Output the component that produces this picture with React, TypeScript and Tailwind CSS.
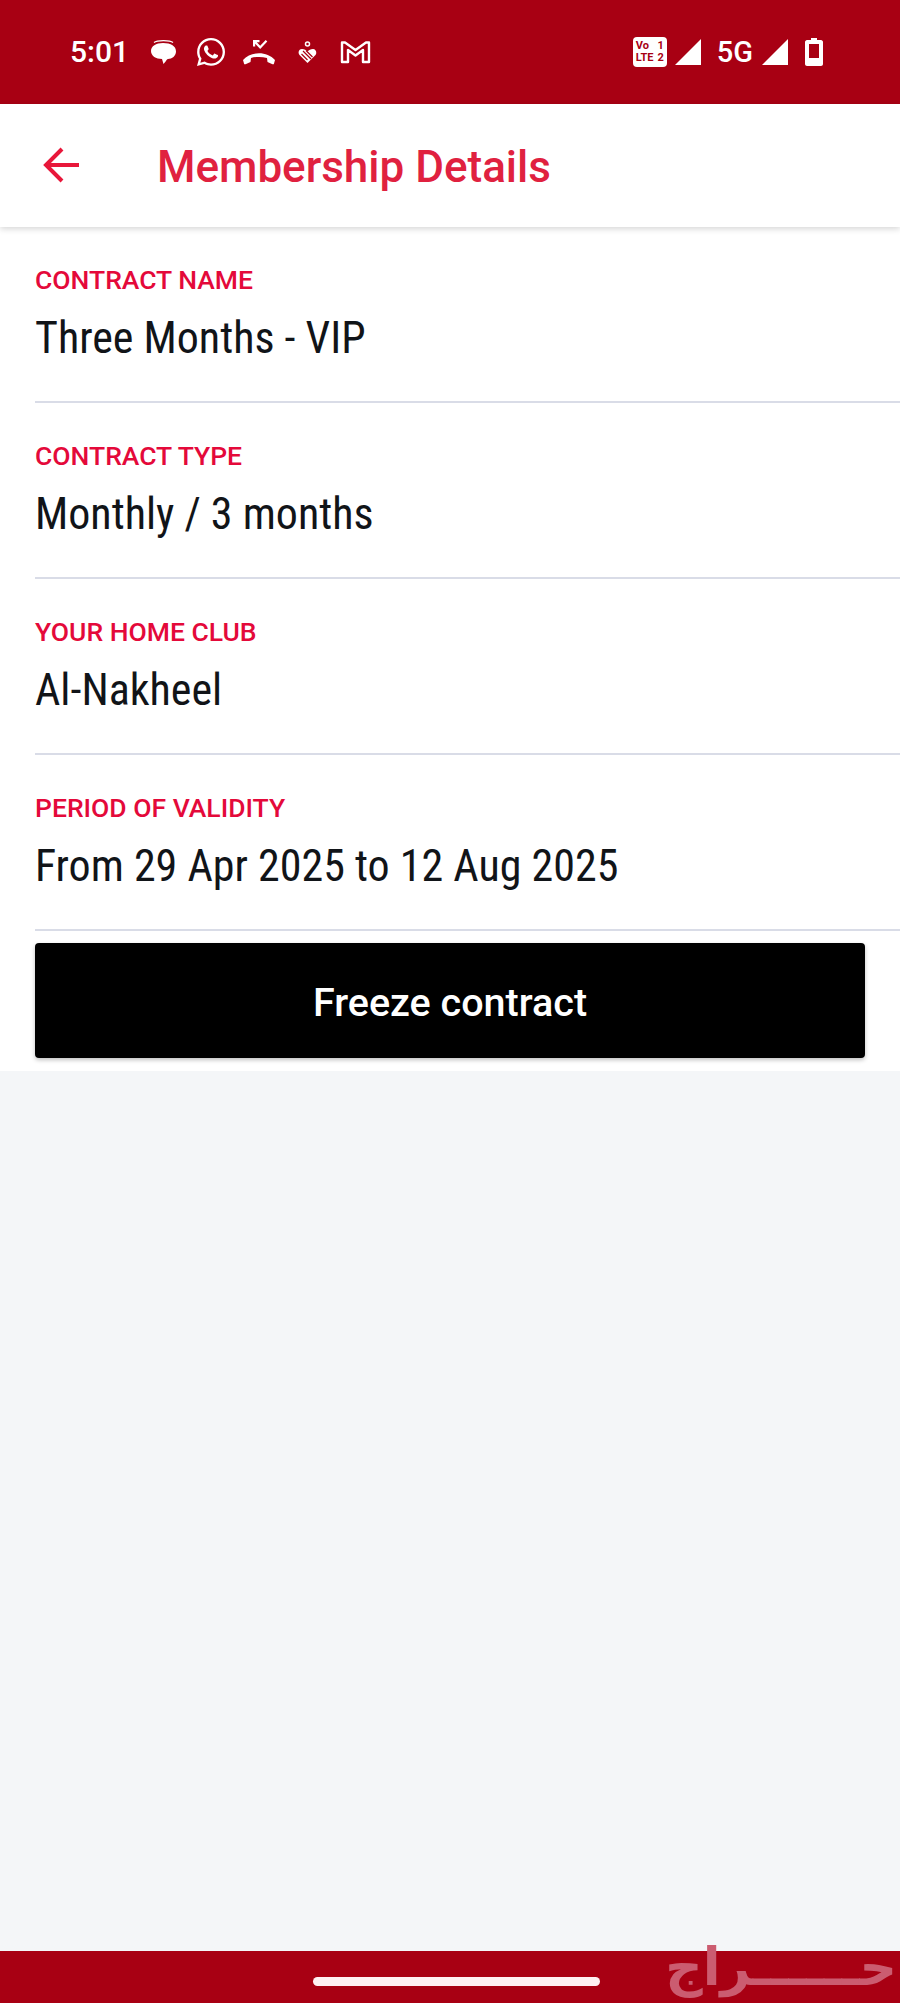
import { FaWhatsapp } from "react-icons/fa";

const rows = [
  { label: "CONTRACT NAME", value: "Three Months - VIP" },
  { label: "CONTRACT TYPE", value: "Monthly / 3 months" },
  { label: "YOUR HOME CLUB", value: "Al-Nakheel" },
  { label: "PERIOD OF VALIDITY", value: "From 29 Apr 2025 to 12 Aug 2025" },
];

function StatusBar() {
  return (
    <div className="flex h-[104px] items-center justify-between bg-[#a80013] pr-[77px] pl-[70px] text-white">
      <div className="flex items-center">
        <span className="text-[30px] leading-none font-medium">5:01</span>
        {/* notification icons */}
        <svg className="ml-[21px]" width="27" height="26" viewBox="0 0 27 26" fill="white">
          <path d="M4 3.500C7 1 20 1 23 3.500" fill="none" stroke="white" strokeWidth="1.200" />
          <path d="M13 4c8 0 13 3 13 8.500 0 4.500-4 7.500-8 7.500-1 0-1.500 1-2 2l-2.500 3-1.500-5C6 20 1 17 1 12 1 7 6 4 13 4z" />
        </svg>
        <FaWhatsapp className="ml-[18px] h-[32px] w-[32px]" />
        <svg className="ml-[15px]" width="34" height="26" viewBox="0 0 34 26" fill="white">
          <path d="M1 21c8-9 24-9 32 0l-1 3.500c0 .8-.8 1-1.500.7l-5-2.200-.5-4c-5-1.500-11-1.500-16 0l-.5 4-5 2.200c-.7.3-1.500.1-1.500-.7z" />
          <path d="M11 1h6.500v2.200h-2.700l3.400 3.600 5.500-5.800 1.600 1.500-7.100 7.500-5-5.200v2.800H11z" />
        </svg>
        <svg className="ml-[22px]" width="19" height="23" viewBox="0 0 19 23" fill="none" stroke="white">
          <circle cx="9.500" cy="3" r="2" strokeWidth="1.500" />
          <path d="M9.500 22 1.500 14c-2-2.200-.6-6 2.500-6 2.500 0 4 1 5.500 2.500C11 9 12.500 8 15 8c3 0 4.200 3.800 2.500 6z" fill="white" stroke="none" />
          <path d="M5 10l8 8M8 9.500l6.500 6.500M3.500 13l6 6" stroke="#a80013" strokeWidth="1.200" />
        </svg>
        <svg className="ml-[23px]" width="31" height="24" viewBox="0 0 31 24" fill="none" stroke="white" strokeWidth="2.400" strokeLinejoin="round">
          <path d="M2 22V2.500h3L15.500 10 26 2.500h3V22h-6V10l-7.500 5.500L8 10v12z" />
        </svg>
      </div>
      <div className="flex items-center">
        <div className="flex h-[30px] w-[34px] flex-col justify-center rounded-[4px] bg-white px-[3px] text-[11px] leading-[12px] font-bold text-[#a80013]">
          <div className="flex justify-between">
            <span>Vo</span>
            <span>1</span>
          </div>
          <div className="flex justify-between">
            <span>LTE</span>
            <span>2</span>
          </div>
        </div>
        <svg className="ml-[8px]" width="27" height="27" viewBox="0 0 27 27" fill="white">
          <path d="M26 0v26H0z" />
        </svg>
        <span className="ml-[15px] text-[29px] leading-none font-medium">5G</span>
        <svg className="ml-[9px]" width="27" height="27" viewBox="0 0 27 27" fill="white">
          <path d="M26 0v26H0z" />
        </svg>
        <svg className="ml-[16px]" width="18" height="28" viewBox="0 0 18 28" fill="white">
          <path fillRule="evenodd" d="M6 0h6v2h4c1 0 2 1 2 2v22c0 1-1 2-2 2H2c-1 0-2-1-2-2V4c0-1 1-2 2-2h4zM4 6v14h10V6z" />
        </svg>
      </div>
    </div>
  );
}

function Row({ label, value }: { label: string; value: string }) {
  return (
    <div className="ml-[35px] h-[176px] border-b-2 border-[#d9dce7] pt-[39px]">
      <div className="text-[26.5px] leading-[28px] font-medium text-[#e4093a]">{label}</div>
      <div className="mt-[19px] text-[44px] leading-[50px] text-[#111418] [font-stretch:75%]">{value}</div>
    </div>
  );
}

export default function App() {
  return (
    <div className="relative flex h-[2003px] w-[900px] flex-col overflow-hidden bg-[#f4f6f8] font-['Roboto',sans-serif]">
      <StatusBar />

      {/* Header */}
      <div className="relative z-10 flex h-[123px] items-center bg-white pt-[2px] pl-[43px] shadow-[0_2px_6px_rgba(0,0,0,0.16)]">
        <svg className="-mt-[4px]" width="36" height="36" viewBox="0 0 36 36" fill="none" stroke="#e8173a" strokeWidth="4">
          <path d="M36 18H3M19 2 3 18l16 16" />
        </svg>
        <h1 className="ml-[78px] text-[44px] leading-none font-medium text-[#e0213f]">Membership Details</h1>
      </div>

      {/* Contract details */}
      <div className="bg-white pb-[13px]">
        {rows.map((r) => (
          <Row key={r.label} label={r.label} value={r.value} />
        ))}
        <button className="mx-[35px] mt-[12px] block h-[115px] w-[830px] rounded-[4px] bg-black pt-[5px] text-[39.5px] font-medium text-white shadow-[0_2px_4px_rgba(0,0,0,0.25)]">
          Freeze contract
        </button>
      </div>

      <div className="grow" />

      {/* Bottom nav bar */}
      <div className="relative flex h-[52px] justify-center bg-[#a80013] pt-[26px]">
        <div className="ml-[12px] h-[9px] w-[287px] rounded-full bg-[#fff0f2]" />
        <span dir="rtl" className="absolute top-[-20px] right-[3px] font-['DejaVu_Sans',sans-serif] text-[52px] leading-[72px] font-bold text-[#cb5c70]">
          حــــــراج
        </span>
      </div>
    </div>
  );
}
